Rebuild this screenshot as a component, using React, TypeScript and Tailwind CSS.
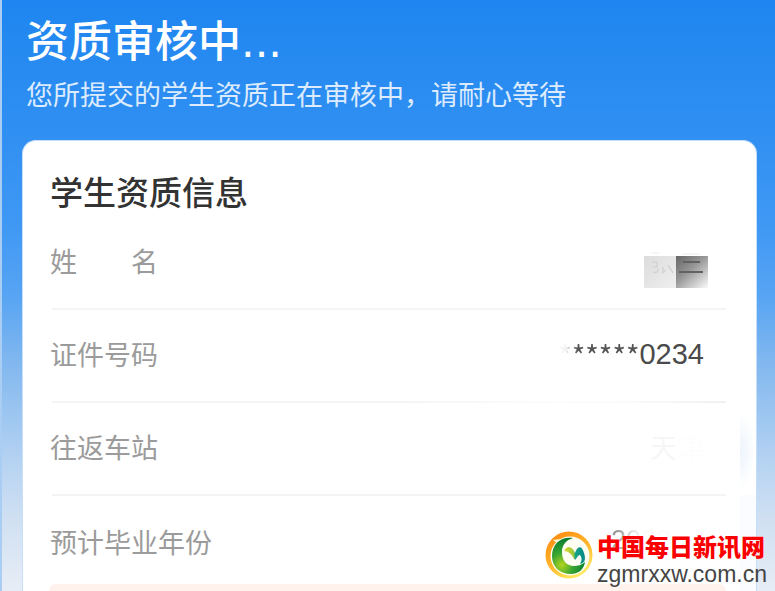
import type { ReactNode } from 'react'

interface RowProps {
  label: ReactNode
  line?: string
  children: ReactNode
}

function InfoRow({ label, line = 'bg-[#f4f4f4]', children }: RowProps) {
  return (
    <div>
      <div className="flex h-[91px] items-center justify-between pr-[22px] pb-1 text-[27px] leading-10">
        <dt className="text-[#9b9b9b]">{label}</dt>
        <dd className="text-[#4a4a4a]">{children}</dd>
      </div>
      <div className={`ml-0.5 h-0.5 ${line}`} />
    </div>
  )
}

function MaskedName() {
  return (
    <svg width="64" height="38" viewBox="0 0 64 38" className="-mr-1 mt-4" role="img">
      <defs>
        <linearGradient id="maskLight" x1="0" y1="0" x2="1" y2="1">
          <stop offset="0" stopColor="#dcdcdc" />
          <stop offset="1" stopColor="#efefef" />
        </linearGradient>
        <linearGradient id="maskDark" x1="0" y1="0" x2="0.9" y2="1">
          <stop offset="0" stopColor="#666" />
          <stop offset="0.45" stopColor="#969696" />
          <stop offset="1" stopColor="#f2f2f2" />
        </linearGradient>
      </defs>
      <path d="M8 3h7M38 4h18" stroke="#f5f5f5" strokeWidth="2" />
      <rect y="6" width="32" height="32" fill="url(#maskLight)" />
      <rect x="32" y="6" width="32" height="32" fill="url(#maskDark)" />
      <path d="M8 12h5v5h-4M9 22q5 2 5-3M19 17v6M18 23l4-3M24 15l5 8" fill="none" stroke="#d3d3d3" strokeWidth="1.5" />
      <path d="M39 12h17M35 22h24" stroke="#626262" strokeWidth="1.8" />
    </svg>
  )
}

function SiteLogo() {
  return (
    <svg width="48" height="48" viewBox="0 0 48 48" aria-hidden="true">
      <defs>
        <linearGradient id="ring" x1="0.2" y1="0" x2="0.8" y2="1">
          <stop offset="0" stopColor="#ff8a12" />
          <stop offset="0.5" stopColor="#ffb62a" />
          <stop offset="1" stopColor="#fff36b" />
        </linearGradient>
        <radialGradient id="leaf" cx="0.3" cy="0.75" r="0.75">
          <stop offset="0" stopColor="#b5d51f" />
          <stop offset="0.45" stopColor="#38a632" />
          <stop offset="1" stopColor="#067b30" />
        </radialGradient>
        <linearGradient id="wing" x1="0" y1="0" x2="1" y2="0">
          <stop offset="0" stopColor="#e2d92c" />
          <stop offset="0.45" stopColor="#9cc83a" />
          <stop offset="0.55" stopColor="#16a287" />
          <stop offset="1" stopColor="#078888" />
        </linearGradient>
      </defs>
      <circle cx="24" cy="24" r="23.5" fill="url(#ring)" />
      <circle cx="25" cy="25" r="19.5" fill="#fffef2" />
      <path d="M8 9l8-1-4 4z" fill="#fff7d8" />
      <path
        d="M28 7C21 9 17 14 17 21c0 9 5 14 12 14 4 0 7-1 11-4-1 7-6 12-14 12C15 43 7 36 7 25 7 13 16 5 28 7z"
        fill="url(#leaf)"
      />
      <path
        d="M19 20c3-6 8-5 11 2 3-8 7-7 9 0 2 6 1 10-4 11 2-4 2-6 0-9-2 0-3 3-5 5-3-5-6-9-11-9z"
        fill="url(#wing)"
      />
    </svg>
  )
}

function Watermark() {
  return (
    <a href="#" className="absolute right-2 bottom-1 flex items-start gap-1">
      <SiteLogo />
      <span className="flex flex-col whitespace-nowrap">
        <span className="text-[24px] leading-[30px] font-black text-[#fb0000] [text-shadow:0_0_2px_#fff]">
          中国每日新讯网
        </span>
        <span className="font-['Liberation_Sans',Arial,sans-serif] text-[23px] leading-[26px] text-[#454545]">
          zgmrxxw.com.cn
        </span>
      </span>
    </a>
  )
}

export default function App() {
  return (
    <main className="relative flex min-h-screen flex-col overflow-hidden border-l-2 border-[#a9cdf3] bg-[linear-gradient(#1e86f0_0%,#308ff2_22%,#3f98f4_38%,#57a4f3_50%,#80b7ef_61%,#b8d4f2_79%,#d0e0f2_88%,#e7edf6_100%)] pr-[18px] pl-5 font-['Noto_Sans_CJK_SC',sans-serif]">
      <header className="px-1 pt-2 text-white">
        <h1 className="text-[43px] leading-[60px] font-medium">
          资质审核中<span className="font-['DejaVu_Sans',sans-serif]">...</span>
        </h1>
        <p className="text-[27px] leading-[44px] text-[#dcebfd]">您所提交的学生资质正在审核中，请耐心等待</p>
      </header>

      <section className="relative mt-6 flex flex-1 flex-col rounded-t-[14px] border border-b-0 border-[#c5dffb] bg-white pr-[30px] pl-[27px]">
        <div className="absolute top-[270px] right-0 h-20 w-4 bg-[radial-gradient(ellipse_at_left,#edf4fc,#ffffff_70%)]" />
        <div className="absolute right-0 bottom-0 h-24 w-4 bg-[#fafcff]" />
        <h2 className="pt-6 text-[33px] leading-[52px] font-medium text-[#333]">学生资质信息</h2>

        <dl>
          <InfoRow
            label={
              <span className="flex gap-[54px]">
                <span>姓</span>
                <span>名</span>
              </span>
            }
          >
            <MaskedName />
          </InfoRow>
          <InfoRow
            label="证件号码"
            line="bg-[linear-gradient(90deg,#f4f4f4_50%,#fdfdfd_75%,#fbfbfb_85%,#f0f0f0_100%)]"
          >
            <span className="flex items-center">
              <span className="bg-[linear-gradient(90deg,#f4f4f4_10%,#555_24%)] bg-clip-text text-[29px] text-transparent">
                ******
              </span>
              <span className="font-['Liberation_Sans',Arial,sans-serif] text-[29px]">0234</span>
            </span>
          </InfoRow>
          <InfoRow label="往返车站">
            <span className="bg-[linear-gradient(90deg,#f6f6f6_45%,#fdfdfd_55%)] bg-clip-text text-transparent">天津</span>
          </InfoRow>
        </dl>

        <dl className="flex h-[88px] items-center justify-between pt-1 text-[27px] leading-10">
          <dt className="text-[#9b9b9b]">预计毕业年份</dt>
          <dd className="w-[115px] bg-[linear-gradient(90deg,#999_6%,#ddd_18%,#fafafa_28%)] bg-clip-text pb-1 font-['Liberation_Sans',Arial,sans-serif] text-transparent">
            2022
          </dd>
        </dl>

        <div className="-ml-px flex-1 rounded-t-[10px] bg-[#fff1ec]" />
      </section>

      <Watermark />
    </main>
  )
}
